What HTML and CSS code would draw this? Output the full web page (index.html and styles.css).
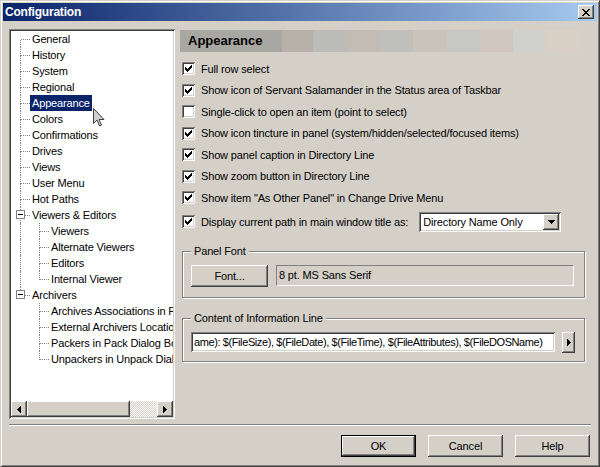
FILE: index.html
```html
<!DOCTYPE html>
<html lang="en">
<head>
    <meta charset="UTF-8">
    <title>Configuration</title>
    <link rel="stylesheet" href="styles.css">
</head>
<body>
    <div class="window">
        <div class="titlebar">
            <span class="title">Configuration</span>
            <div class="title-close raised">
                <svg width="8" height="7" viewBox="0 0 8 7"><path d="M0 0h2v1h-2z M6 0h2v1h-2z M1 1h2v1h-2z M5 1h2v1h-2z M2 2h4v1h-4z M3 3h2v1h-2z M2 4h4v1h-4z M1 5h2v1h-2z M5 5h2v1h-2z M0 6h2v1h-2z M6 6h2v1h-2z" fill="#000"/></svg>
            </div>
        </div>

        <div class="content">
            <div class="main">
                <div class="tree">
                    <ul class="tree-list">
                        <li class="node first"><span class="branch"></span><span class="label">General</span></li>
                        <li class="node"><span class="branch"></span><span class="label">History</span></li>
                        <li class="node"><span class="branch"></span><span class="label">System</span></li>
                        <li class="node"><span class="branch"></span><span class="label">Regional</span></li>
                        <li class="node"><span class="branch"></span><span class="label selected">Appearance</span></li>
                        <li class="node"><span class="branch"></span><span class="label">Colors</span></li>
                        <li class="node"><span class="branch"></span><span class="label">Confirmations</span></li>
                        <li class="node"><span class="branch"></span><span class="label">Drives</span></li>
                        <li class="node"><span class="branch"></span><span class="label">Views</span></li>
                        <li class="node"><span class="branch"></span><span class="label">User Menu</span></li>
                        <li class="node"><span class="branch"></span><span class="label">Hot Paths</span></li>
                        <li class="node"><span class="branch"><span class="expander"></span></span><span class="label">Viewers &amp; Editors</span></li>
                        <li class="node"><span class="cont line"></span><span class="branch"></span><span class="label">Viewers</span></li>
                        <li class="node"><span class="cont line"></span><span class="branch"></span><span class="label">Alternate Viewers</span></li>
                        <li class="node"><span class="cont line"></span><span class="branch"></span><span class="label">Editors</span></li>
                        <li class="node last"><span class="cont line"></span><span class="branch"></span><span class="label">Internal Viewer</span></li>
                        <li class="node last"><span class="branch"><span class="expander"></span></span><span class="label">Archivers</span></li>
                        <li class="node"><span class="cont"></span><span class="branch"></span><span class="label">Archives Associations in Panels</span></li>
                        <li class="node"><span class="cont"></span><span class="branch"></span><span class="label">External Archivers Locations</span></li>
                        <li class="node"><span class="cont"></span><span class="branch"></span><span class="label">Packers in Pack Dialog Box</span></li>
                        <li class="node last"><span class="cont"></span><span class="branch"></span><span class="label">Unpackers in Unpack Dialog Box</span></li>
                    </ul>
                    <div class="hscroll">
                        <div class="scroll-btn raised">
                            <svg width="4" height="7" viewBox="0 0 4 7"><path d="M3 0h1v7h-1z M2 1h1v5h-1z M1 2h1v3h-1z M0 3h1v1h-1z" fill="#000"/></svg>
                        </div>
                        <div class="scroll-thumb raised"></div>
                        <div class="scroll-track"></div>
                        <div class="scroll-btn raised">
                            <svg width="4" height="7" viewBox="0 0 4 7"><path d="M0 0h1v7h-1z M1 1h1v5h-1z M2 2h1v3h-1z M3 3h1v1h-1z" fill="#000"/></svg>
                        </div>
                    </div>
                </div>

                <div class="page">
                    <div class="page-header">Appearance</div>

                    <div class="options">
                        <div class="option"><span class="check"><svg width="9" height="9" viewBox="0 0 9 9"><path d="M1 3h1v3h-1z M2 4h1v3h-1z M3 5h1v3h-1z M4 4h1v3h-1z M5 3h1v3h-1z M6 2h1v3h-1z M7 1h1v3h-1z" fill="#000"/></svg></span>Full row select</div>
                        <div class="option"><span class="check"><svg width="9" height="9" viewBox="0 0 9 9"><path d="M1 3h1v3h-1z M2 4h1v3h-1z M3 5h1v3h-1z M4 4h1v3h-1z M5 3h1v3h-1z M6 2h1v3h-1z M7 1h1v3h-1z" fill="#000"/></svg></span>Show icon of Servant Salamander in the Status area of Taskbar</div>
                        <div class="option"><span class="check"></span>Single-click to open an item (point to select)</div>
                        <div class="option"><span class="check"><svg width="9" height="9" viewBox="0 0 9 9"><path d="M1 3h1v3h-1z M2 4h1v3h-1z M3 5h1v3h-1z M4 4h1v3h-1z M5 3h1v3h-1z M6 2h1v3h-1z M7 1h1v3h-1z" fill="#000"/></svg></span>Show icon tincture in panel (system/hidden/selected/focused items)</div>
                        <div class="option"><span class="check"><svg width="9" height="9" viewBox="0 0 9 9"><path d="M1 3h1v3h-1z M2 4h1v3h-1z M3 5h1v3h-1z M4 4h1v3h-1z M5 3h1v3h-1z M6 2h1v3h-1z M7 1h1v3h-1z" fill="#000"/></svg></span>Show panel caption in Directory Line</div>
                        <div class="option"><span class="check"><svg width="9" height="9" viewBox="0 0 9 9"><path d="M1 3h1v3h-1z M2 4h1v3h-1z M3 5h1v3h-1z M4 4h1v3h-1z M5 3h1v3h-1z M6 2h1v3h-1z M7 1h1v3h-1z" fill="#000"/></svg></span>Show zoom button in Directory Line</div>
                        <div class="option"><span class="check"><svg width="9" height="9" viewBox="0 0 9 9"><path d="M1 3h1v3h-1z M2 4h1v3h-1z M3 5h1v3h-1z M4 4h1v3h-1z M5 3h1v3h-1z M6 2h1v3h-1z M7 1h1v3h-1z" fill="#000"/></svg></span>Show item "As Other Panel" in Change Drive Menu</div>
                        <div class="option option-combo">
                            <span class="check"><svg width="9" height="9" viewBox="0 0 9 9"><path d="M1 3h1v3h-1z M2 4h1v3h-1z M3 5h1v3h-1z M4 4h1v3h-1z M5 3h1v3h-1z M6 2h1v3h-1z M7 1h1v3h-1z" fill="#000"/></svg></span>
                            <span>Display current path in main window title as:</span>
                            <div class="combo">
                                <span class="combo-text">Directory Name Only</span>
                                <div class="combo-btn raised">
                                    <svg width="7" height="4" viewBox="0 0 7 4"><path d="M0 0h7v1h-7z M1 1h5v1h-5z M2 2h3v1h-3z M3 3h1v1h-1z" fill="#000"/></svg>
                                </div>
                            </div>
                        </div>
                    </div>

                    <fieldset class="group">
                        <legend>Panel Font</legend>
                        <div class="group-row">
                            <div class="button raised font-btn">Font...</div>
                            <div class="readonly">8 pt. MS Sans Serif</div>
                        </div>
                    </fieldset>

                    <fieldset class="group group-info">
                        <legend>Content of Information Line</legend>
                        <div class="group-row">
                            <div class="edit">ame): $(FileSize), $(FileDate), $(FileTime), $(FileAttributes), $(FileDOSName)</div>
                            <div class="arrow-btn raised">
                                <svg width="4" height="7" viewBox="0 0 4 7"><path d="M0 0h1v7h-1z M1 1h1v5h-1z M2 2h1v3h-1z M3 3h1v1h-1z" fill="#000"/></svg>
                            </div>
                        </div>
                    </fieldset>
                </div>
            </div>

            <div class="footer">
                <div class="separator"></div>
                <div class="buttons">
                    <div class="button raised default">OK</div>
                    <div class="button raised">Cancel</div>
                    <div class="button raised">Help</div>
                </div>
            </div>
        </div>

        <svg class="cursor" width="12" height="19" viewBox="0 0 12 19">
            <path d="M0.5 0.5 L0.5 15.5 L4 12 L6.5 18 L8.5 17 L6 11.5 L11 11.5 Z" fill="#d0d0d0" stroke="#404040" stroke-width="1"/>
        </svg>
    </div>
</body>
</html>
```

FILE: styles.css
```css
* {
    margin: 0;
    padding: 0;
    box-sizing: border-box;
}

body {
    background-color: #d4d0c8;
    font-family: "Liberation Sans", Arial, sans-serif;
    font-size: 11px;
    letter-spacing: -0.15px;
    color: #000;
    overflow: hidden;
}

.window {
    position: relative;
    width: 600px;
    height: 467px;
    border: 1px solid;
    border-color: #d4d0c8 #404040 #404040 #d4d0c8;
    box-shadow: inset 1px 1px #fff, inset -1px -1px #808080;
    padding: 2px;
    background-color: #d4d0c8;
    display: flex;
    flex-direction: column;
}

/* shared 3d borders */
.raised {
    background-color: #d4d0c8;
    box-shadow: inset -1px -1px #404040, inset 1px 1px #fff, inset -2px -2px #808080;
}

.titlebar {
    height: 18px;
    background: linear-gradient(to right, #0a246a, #a6caf0);
    display: flex;
    align-items: center;
    padding-left: 2px;
}

.title {
    color: #fff;
    font-weight: bold;
    font-size: 12px;
    letter-spacing: -0.2px;
}

.title-close {
    margin-left: auto;
    margin-right: 3px;
    width: 16px;
    height: 14px;
    display: flex;
    align-items: center;
    justify-content: center;
    padding-right: 1px;
}

.content {
    flex: 1;
    padding: 8px 6px 0 6px;
    display: flex;
    flex-direction: column;
}

.main {
    display: flex;
    height: 390px;
}

/* tree */
.tree {
    width: 166px;
    background-color: #fff;
    padding: 2px;
    box-shadow: inset 1px 1px #808080, inset -1px -1px #fff, inset 2px 2px #404040, inset -2px -2px #d4d0c8;
    display: flex;
    flex-direction: column;
}

.tree-list {
    flex: 1;
    list-style: none;
    overflow: hidden;
}

.node {
    display: flex;
    height: 16px;
    padding-left: 9px;
    white-space: nowrap;
}

.branch {
    position: relative;
    width: 10px;
    height: 16px;
    flex: none;
    display: flex;
    flex-direction: column;
}

.branch::before {
    content: "";
    height: 8px;
    border-left: 1px dotted #808080;
    border-bottom: 1px dotted #808080;
}

.branch::after {
    content: "";
    flex: 1;
    border-left: 1px dotted #808080;
}

.first .branch::before {
    border-left: none;
    margin-left: 1px;
}

.last .branch::after {
    border-left: none;
}

.cont {
    width: 19px;
    height: 16px;
    flex: none;
}

.cont.line {
    border-left: 1px dotted #808080;
}

.expander {
    position: absolute;
    left: -4px;
    top: 3px;
    width: 9px;
    height: 9px;
    border: 1px solid #808080;
    background-color: #fff;
}

.expander::after {
    content: "";
    position: absolute;
    left: 1px;
    top: 3px;
    width: 5px;
    height: 1px;
    background-color: #000;
}

.label {
    line-height: 16px;
    padding: 0 2px;
}

.label.selected {
    background-color: #0a246a;
    color: #fff;
}

.hscroll {
    height: 16px;
    display: flex;
}

.scroll-btn {
    width: 16px;
    height: 16px;
    display: flex;
    align-items: center;
    justify-content: center;
}

.scroll-thumb {
    width: 103px;
}

.scroll-track {
    flex: 1;
    background: repeating-conic-gradient(#fff 0 25%, #d4d0c8 0 50%) 0 0 / 2px 2px;
}

/* right page */
.page {
    width: 411px;
    margin-left: 5px;
}

.page-header {
    margin-top: 1px;
    width: 398px;
    height: 22px;
    line-height: 22px;
    padding-left: 8px;
    font-size: 13px;
    font-weight: bold;
    letter-spacing: 0;
    background: linear-gradient(to right,
        #a9a7a1 0 102px, #b8b1a9 102px 133px, #bbbbb7 133px 168px,
        #c3bcb4 168px 200px, #bfbfbb 200px 233px, #cac3bb 233px 267px,
        #c7c7c3 267px 300px, #d0c8bf 300px 333px, #d0d0cc 333px 365px,
        #d9d0c6 365px 398px);
}

.options {
    margin-top: 6px;
    padding-left: 2px;
}

.option {
    height: 21.5px;
    display: flex;
    align-items: center;
    white-space: nowrap;
}

.check {
    width: 13px;
    height: 13px;
    flex: none;
    margin-right: 6px;
    padding: 2px;
    background-color: #fff;
    box-shadow: inset 1px 1px #808080, inset -1px -1px #fff, inset 2px 2px #404040, inset -2px -2px #d4d0c8;
}

.check svg {
    display: block;
}

.option-combo {
    height: 22px;
    margin-top: 2px;
}

.combo {
    margin-left: 11px;
    width: 142px;
    height: 20px;
    background-color: #fff;
    padding: 2px;
    box-shadow: inset 1px 1px #808080, inset -1px -1px #fff, inset 2px 2px #404040, inset -2px -2px #d4d0c8;
    display: flex;
    align-items: center;
}

.combo-text {
    flex: 1;
    padding-left: 2px;
}

.combo-btn {
    width: 16px;
    height: 16px;
    display: flex;
    align-items: center;
    justify-content: center;
}

.group {
    margin: 12px 0 0 2px;
    width: 403px;
    border: 1px solid #808080;
    box-shadow: inset 1px 1px #fff, 1px 1px #fff;
    padding: 7px 8px 10px 8px;
    min-inline-size: 0;
}

.group legend {
    padding: 0 3px;
    line-height: 13px;
    background-color: #d4d0c8;
}

.group-info {
    margin-top: 14px;
    padding-top: 7px;
    padding-bottom: 8px;
}

.group-row {
    display: flex;
    align-items: center;
}

.button {
    width: 75px;
    height: 22px;
    display: flex;
    align-items: center;
    justify-content: center;
}

.font-btn {
    width: 77px;
    margin-right: 8px;
}

.readonly {
    width: 298px;
    height: 21px;
    line-height: 19px;
    padding-left: 2px;
    border: 1px solid;
    border-color: #808080 #fff #fff #808080;
}

.edit {
    width: 364px;
    height: 20px;
    line-height: 16px;
    padding: 2px 3px;
    background-color: #fff;
    white-space: nowrap;
    overflow: hidden;
    letter-spacing: -0.4px;
    box-shadow: inset 1px 1px #808080, inset -1px -1px #fff, inset 2px 2px #404040, inset -2px -2px #d4d0c8;
}

.arrow-btn {
    width: 13px;
    height: 21px;
    margin-left: 7px;
    display: flex;
    align-items: center;
    justify-content: center;
}

/* footer */
.footer {
    margin-top: 5px;
}

.separator {
    border-top: 1px solid #808080;
    border-bottom: 1px solid #fff;
}

.buttons {
    margin-top: 9px;
    padding-right: 1px;
    display: flex;
    justify-content: flex-end;
    gap: 12px;
}

.button.default {
    border: 1px solid #000;
}

.cursor {
    position: absolute;
    left: 92px;
    top: 107px;
}
```
